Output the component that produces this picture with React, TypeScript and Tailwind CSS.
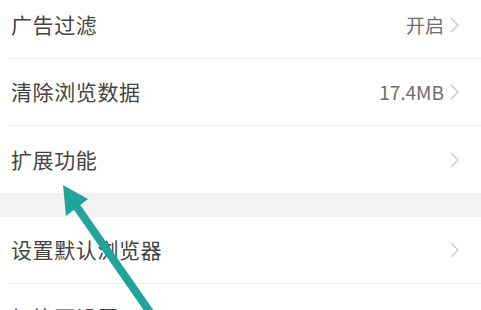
import { ReactNode } from 'react'

function Chevron() {
    return (
        <svg width="9" height="16" viewBox="0 0 9 16" className="ml-[6px]">
            <path d="M1 1 L8 8 L1 15" fill="none" stroke="#c8c8c8" strokeWidth="1.4" />
        </svg>
    )
}

function Row({ label, value, divider = true }: { label: string; value?: ReactNode; divider?: boolean }) {
    return (
        <div className={`h-[67px] ml-[8px] flex items-center pl-[3px] pr-[22px] ${divider ? 'border-b border-[#ececec]' : ''}`}>
            <span className="flex-1 text-[21px] text-[#444444] tracking-[0.6px]">{label}</span>
            {value && <span className="text-[19px] text-[#6e6e6e]">{value}</span>}
            <Chevron />
        </div>
    )
}

export default function App() {
    return (
        <div
            className="relative w-[481px] h-[310px] overflow-hidden bg-white"
            style={{ fontFamily: '"Noto Sans CJK SC", "Noto Sans", sans-serif' }}
        >
            <div className="-mt-[8px]">
                <Row label="广告过滤" value="开启" />
                <Row label="清除浏览数据" value="17.4MB" />
                <Row label="扩展功能" divider={false} />
                <div className="h-[24px] bg-[#f2f2f2]" />
                <Row label="设置默认浏览器" />
                <Row label="标签页设置" divider={false} />
            </div>

            {/* annotation arrow */}
            <svg className="absolute inset-0 pointer-events-none" width="481" height="310" viewBox="0 0 481 310">
                <line x1="152" y1="315" x2="72" y2="200" stroke="#22a39b" strokeWidth="8" />
                <polygon points="63,185 88,199 66,216" fill="#22a39b" />
            </svg>
        </div>
    )
}
